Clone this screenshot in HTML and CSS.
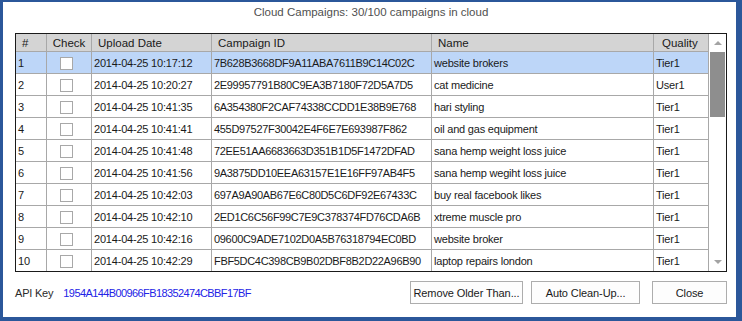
FILE: index.html
```html
<!DOCTYPE html>
<html lang="en">
<head>
    <meta charset="UTF-8">
    <title>Cloud Campaigns</title>
    <link rel="stylesheet" href="styles.css">
</head>
<body>
    <div class="window">
        <div class="title">Cloud Campaigns: 30/100 campaigns in cloud</div>

        <div class="grid-box">
            <div class="grid">
                <div class="row head">
                    <div class="cell">#</div>
                    <div class="cell center">Check</div>
                    <div class="cell">Upload Date</div>
                    <div class="cell">Campaign ID</div>
                    <div class="cell">Name</div>
                    <div class="cell quality">Quality</div>
                </div>
                <div class="row selected">
                    <div class="cell">1</div>
                    <div class="cell check"><span class="box"></span></div>
                    <div class="cell">2014-04-25 10:17:12</div>
                    <div class="cell id">7B628B3668DF9A11ABA7611B9C14C02C</div>
                    <div class="cell">website brokers</div>
                    <div class="cell">Tier1</div>
                </div>
                <div class="row">
                    <div class="cell">2</div>
                    <div class="cell check"><span class="box"></span></div>
                    <div class="cell">2014-04-25 10:20:27</div>
                    <div class="cell id">2E99957791B80C9EA3B7180F72D5A7D5</div>
                    <div class="cell">cat medicine</div>
                    <div class="cell">User1</div>
                </div>
                <div class="row">
                    <div class="cell">3</div>
                    <div class="cell check"><span class="box"></span></div>
                    <div class="cell">2014-04-25 10:41:35</div>
                    <div class="cell id">6A354380F2CAF74338CCDD1E38B9E768</div>
                    <div class="cell">hari styling</div>
                    <div class="cell">Tier1</div>
                </div>
                <div class="row">
                    <div class="cell">4</div>
                    <div class="cell check"><span class="box"></span></div>
                    <div class="cell">2014-04-25 10:41:41</div>
                    <div class="cell id">455D97527F30042E4F6E7E693987F862</div>
                    <div class="cell">oil and gas equipment</div>
                    <div class="cell">Tier1</div>
                </div>
                <div class="row">
                    <div class="cell">5</div>
                    <div class="cell check"><span class="box"></span></div>
                    <div class="cell">2014-04-25 10:41:48</div>
                    <div class="cell id">72EE51AA6683663D351B1D5F1472DFAD</div>
                    <div class="cell">sana hemp weight loss juice</div>
                    <div class="cell">Tier1</div>
                </div>
                <div class="row">
                    <div class="cell">6</div>
                    <div class="cell check"><span class="box"></span></div>
                    <div class="cell">2014-04-25 10:41:56</div>
                    <div class="cell id">9A3875DD10EEA63157E1E16FF97AB4F5</div>
                    <div class="cell">sana hemp wegiht loss juice</div>
                    <div class="cell">Tier1</div>
                </div>
                <div class="row">
                    <div class="cell">7</div>
                    <div class="cell check"><span class="box"></span></div>
                    <div class="cell">2014-04-25 10:42:03</div>
                    <div class="cell id">697A9A90AB67E6C80D5C6DF92E67433C</div>
                    <div class="cell">buy real facebook likes</div>
                    <div class="cell">Tier1</div>
                </div>
                <div class="row">
                    <div class="cell">8</div>
                    <div class="cell check"><span class="box"></span></div>
                    <div class="cell">2014-04-25 10:42:10</div>
                    <div class="cell id">2ED1C6C56F99C7E9C378374FD76CDA6B</div>
                    <div class="cell">xtreme muscle pro</div>
                    <div class="cell">Tier1</div>
                </div>
                <div class="row">
                    <div class="cell">9</div>
                    <div class="cell check"><span class="box"></span></div>
                    <div class="cell">2014-04-25 10:42:16</div>
                    <div class="cell id">09600C9ADE7102D0A5B76318794EC0BD</div>
                    <div class="cell">website broker</div>
                    <div class="cell">Tier1</div>
                </div>
                <div class="row last">
                    <div class="cell">10</div>
                    <div class="cell check"><span class="box"></span></div>
                    <div class="cell">2014-04-25 10:42:29</div>
                    <div class="cell id">FBF5DC4C398CB9B02DBF8B2D22A96B90</div>
                    <div class="cell">laptop repairs london</div>
                    <div class="cell">Tier1</div>
                </div>
            </div>

            <div class="scrollbar">
                <div class="arrow-btn"><span class="arrow up"></span></div>
                <div class="track"><div class="thumb"></div></div>
                <div class="arrow-btn"><span class="arrow down"></span></div>
            </div>
        </div>

        <div class="footer">
            <span class="api-label">API Key</span>
            <span class="api-value">1954A144B00966FB18352474CBBF17BF</span>
            <button class="btn btn-remove">Remove Older Than...</button>
            <button class="btn btn-auto">Auto Clean-Up...</button>
            <button class="btn btn-close">Close</button>
        </div>
    </div>
</body>
</html>
```

FILE: styles.css
```css
* {
    margin: 0;
    padding: 0;
    box-sizing: border-box;
}

body {
    font-family: 'Liberation Sans', Arial, sans-serif;
    font-size: 11px;
    color: #1a1a1a;
    background-color: #2b579a;
}

.window {
    width: 742px;
    height: 321px;
    background-color: #ffffff;
    border-style: solid;
    border-color: #2b579a;
    border-width: 2px 6px 4px 3px;
    padding: 0 9px 0 12px;
}

.title {
    height: 20px;
    line-height: 20px;
    margin-bottom: 11px;
    text-align: center;
    font-size: 11.5px;
    color: #4f4f4f;
}

/* grid + scrollbar share one black frame */
.grid-box {
    display: flex;
    width: 712px;
    height: 239px;
    border: 1px solid #1a1a1a;
}

.grid {
    width: 693px;
}

.row {
    display: grid;
    grid-template-columns: 31px 45px 120px 220px 222px 55px;
    height: 22px;
}

.row.head {
    height: 18px;
    background-color: #d4d4d4;
    font-size: 11.5px;
}

.row.last {
    height: 21px;
}

.row.selected {
    background-color: #bdd6f8;
}

.cell {
    display: flex;
    align-items: center;
    padding: 1px 0 0 2px;
    border-right: 1px solid #a8a8a8;
    border-bottom: 1px solid #a8a8a8;
    white-space: nowrap;
    overflow: hidden;
    letter-spacing: -0.2px;
}

.cell.id {
    letter-spacing: -0.32px;
}

.row.last .cell {
    border-bottom: none;
}

.head .cell {
    padding-left: 6px;
    letter-spacing: 0;
}

.head .cell.center {
    justify-content: center;
    padding-left: 0;
}

.head .cell.quality {
    padding-left: 8px;
}

.cell.check {
    padding-left: 13px;
}

.box {
    width: 13px;
    height: 13px;
    border: 1px solid #a8a8a8;
    background-color: #ffffff;
}

.scrollbar {
    width: 17px;
    display: flex;
    flex-direction: column;
}

.arrow-btn {
    height: 18px;
    display: flex;
    justify-content: center;
    align-items: center;
}

.arrow {
    width: 0;
    height: 0;
    border-left: 4px solid transparent;
    border-right: 4px solid transparent;
}

.arrow.up {
    border-bottom: 4px solid #a3a3a3;
}

.arrow.down {
    border-top: 4px solid #a3a3a3;
}

.track {
    flex: 1;
    padding: 0 1px;
}

.thumb {
    height: 65px;
    background-color: #8e8e8e;
}

.footer {
    display: flex;
    align-items: center;
    margin-top: 9px;
    height: 23px;
}

.api-label {
    color: #2a2a2a;
    letter-spacing: -0.2px;
}

.api-value {
    margin-left: 10px;
    color: #2323e6;
    letter-spacing: -0.6px;
}

.btn {
    height: 23px;
    font-family: inherit;
    font-size: 11px;
    color: #1a1a1a;
    background-color: #fdfdfd;
    border: 1px solid #adadad;
    letter-spacing: -0.1px;
}

.btn-remove {
    width: 113px;
    margin-left: auto;
}

.btn-auto {
    width: 109px;
    margin-left: 8px;
}

.btn-close {
    width: 75px;
    margin-left: 12px;
}
```
